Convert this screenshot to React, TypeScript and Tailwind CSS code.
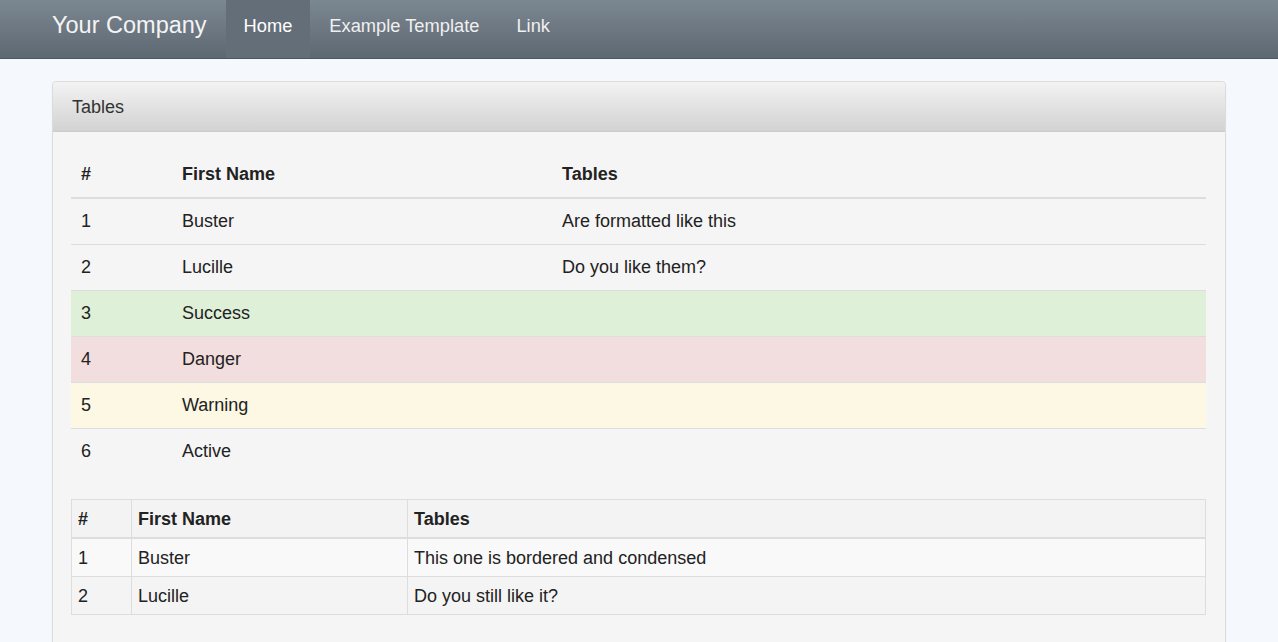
import React from "react";

const striped = [
  { n: "1", name: "Buster", text: "Are formatted like this", row: "" },
  { n: "2", name: "Lucille", text: "Do you like them?", row: "" },
  { n: "3", name: "Success", text: "", row: "bg-[#dff0d8]" },
  { n: "4", name: "Danger", text: "", row: "bg-[#f2dede]" },
  { n: "5", name: "Warning", text: "", row: "bg-[#fcf8e3]" },
  { n: "6", name: "Active", text: "", row: "bg-[#f5f5f5]" },
];

const bordered = [
  { n: "1", name: "Buster", text: "This one is bordered and condensed", row: "bg-[#f9f9f9]" },
  { n: "2", name: "Lucille", text: "Do you still like it?", row: "bg-[#f4f4f4]" },
];

export default function App() {
  return (
    <div className="min-h-screen bg-[#f5f8fc] text-[#222] font-['Liberation_Sans',Arial,sans-serif]">
      <nav className="h-[59px] border-b border-[#4e5761] bg-gradient-to-b from-[#7b8791] to-[#5e6872]">
        <div className="flex h-full items-stretch px-[52px]">
          <a className="flex items-center pr-[19px] pb-[6px] text-[23.5px] text-[#f4f4f4]">Your Company</a>
          <a className="flex items-center bg-[#646e78] px-[18px] pb-[6px] text-[18.3px] text-white">Home</a>
          <a className="flex items-center px-[19px] pb-[6px] text-[18.3px] text-[#f0f0f0]">Example Template</a>
          <a className="flex items-center px-[18px] pb-[6px] text-[18.3px] text-[#f0f0f0]">Link</a>
        </div>
      </nav>

      <div className="px-[52px] pt-[22px]">
        <div className="rounded-[4px] border border-[#dcdcdc] bg-[#f5f5f5] shadow-[0_1px_2px_rgba(0,0,0,0.06)]">
          <div className="h-[50px] rounded-t-[4px] border-b border-[#cccccc] bg-gradient-to-b from-[#f3f3f3] to-[#d2d2d2] px-[19px] pt-[12px] text-[18px] text-[#333]">
            Tables
          </div>
          <div className="pl-[18px] pr-[19px] pt-[20px] pb-[30px]">
            <table className="w-full border-collapse text-[18px] leading-[25px]">
              <thead>
                <tr className="border-b-2 border-[#dddddd] text-left font-bold">
                  <th className="w-[101px] px-[10px] py-[10px]">#</th>
                  <th className="w-[380px] px-[10px] py-[10px]">First Name</th>
                  <th className="px-[10px] py-[10px]">Tables</th>
                </tr>
              </thead>
              <tbody>
                {striped.map((r) => (
                  <tr key={r.n} className={`border-t border-[#dddddd] ${r.row}`}>
                    <td className="px-[10px] py-[10px]">{r.n}</td>
                    <td className="px-[10px] py-[10px]">{r.name}</td>
                    <td className="px-[10px] py-[10px]">{r.text}</td>
                  </tr>
                ))}
              </tbody>
            </table>

            <table className="mt-[25px] w-full border-collapse border border-[#dddddd] text-[18px] leading-[26px]">
              <thead>
                <tr className="border-b-2 border-[#dddddd] bg-[#f3f3f3] text-left font-bold">
                  <th className="w-[60px] border border-[#dddddd] px-[6px] pt-[6px] pb-[5px]">#</th>
                  <th className="w-[276px] border border-[#dddddd] px-[6px] pt-[6px] pb-[5px]">First Name</th>
                  <th className="border border-[#dddddd] px-[6px] pt-[6px] pb-[5px]">Tables</th>
                </tr>
              </thead>
              <tbody>
                {bordered.map((r) => (
                  <tr key={r.n} className={r.row}>
                    <td className="border border-[#dddddd] px-[6px] pt-[6px] pb-[5px]">{r.n}</td>
                    <td className="border border-[#dddddd] px-[6px] pt-[6px] pb-[5px]">{r.name}</td>
                    <td className="border border-[#dddddd] px-[6px] pt-[6px] pb-[5px]">{r.text}</td>
                  </tr>
                ))}
              </tbody>
            </table>
          </div>
        </div>
      </div>
    </div>
  );
}
